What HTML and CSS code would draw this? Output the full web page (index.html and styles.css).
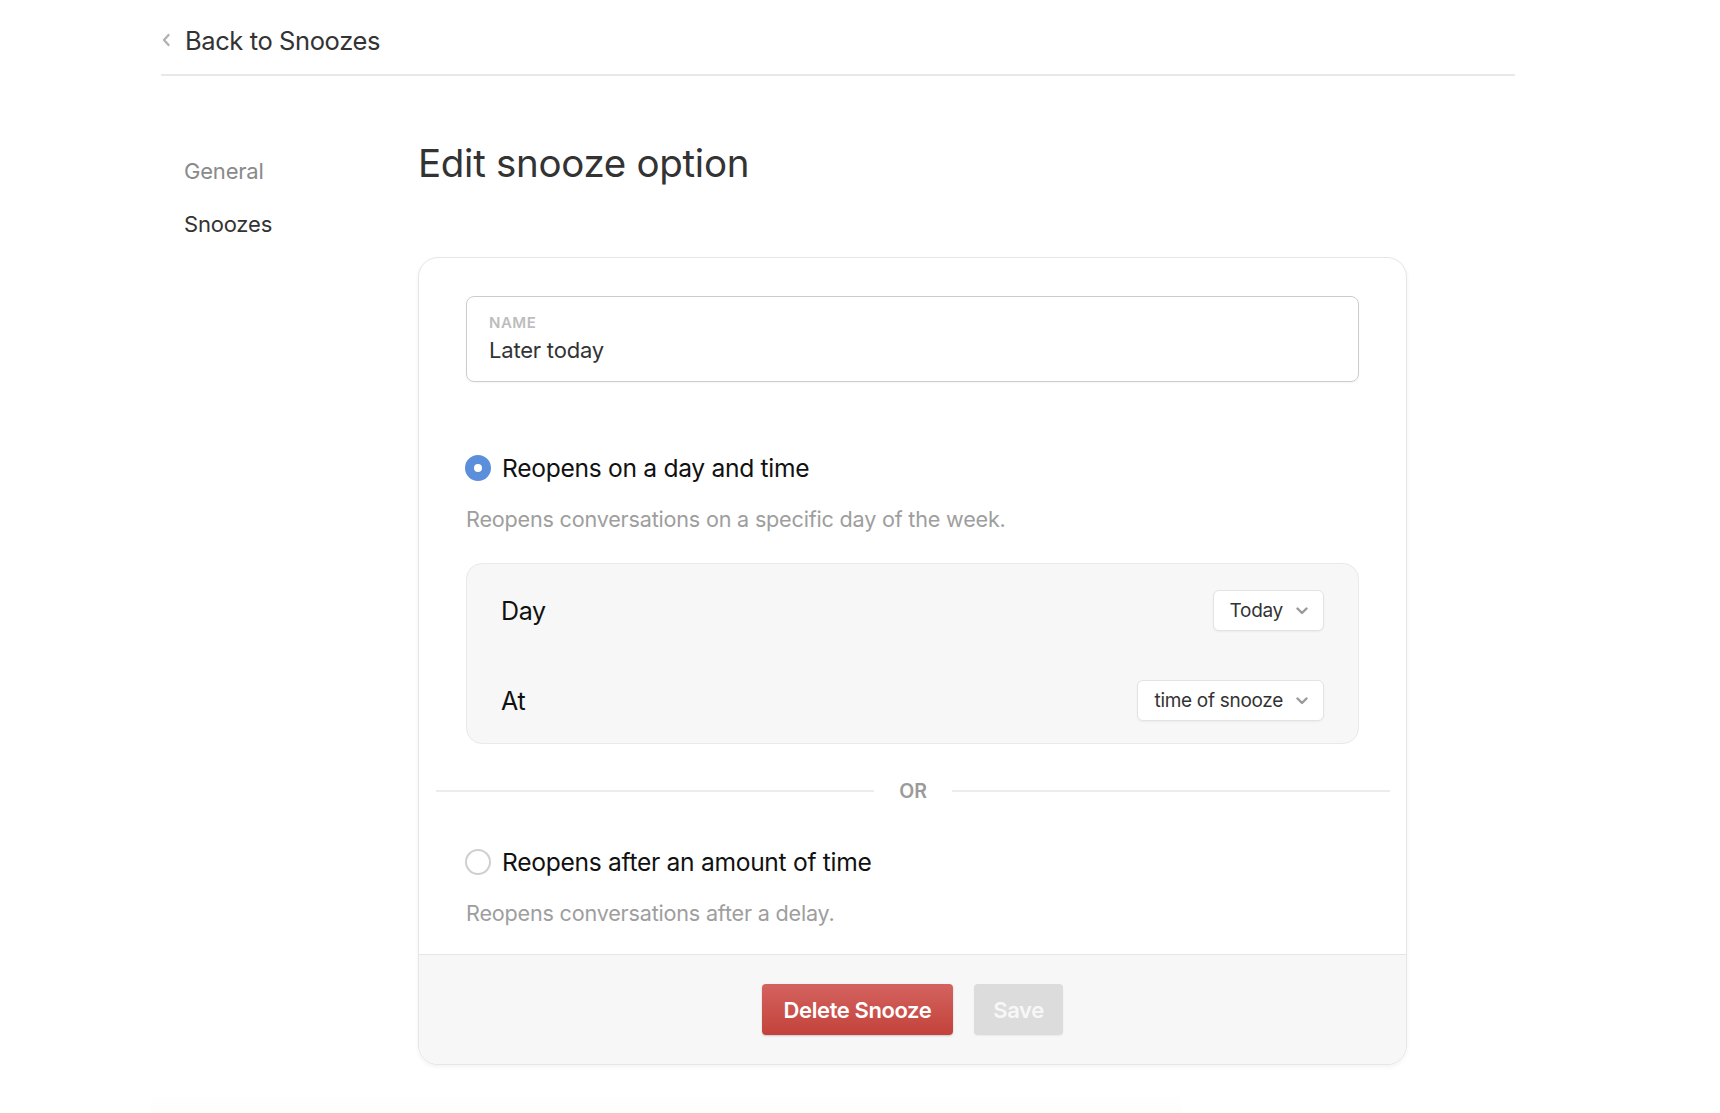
FILE: index.html
```html
<!DOCTYPE html>
<html lang="en">
<head>
<meta charset="utf-8">
<title>Edit snooze option</title>
<link rel="stylesheet" href="styles.css">
</head>
<body>
<div class="page">
  <header class="topbar">
    <a class="back-link" href="#">
      <svg class="back-chevron" width="10" height="14" viewBox="0 0 10 14" aria-hidden="true">
        <path d="M7.5 2 L3 7 L7.5 12" fill="none" stroke="#b3b3b3" stroke-width="2.4" stroke-linecap="round" stroke-linejoin="round"/>
      </svg>
      <span>Back to Snoozes</span>
    </a>
  </header>

  <div class="layout">
    <nav class="sidenav">
      <a class="sidenav-item" href="#">General</a>
      <a class="sidenav-item is-active" href="#">Snoozes</a>
    </nav>

    <main class="content">
      <h1 class="page-title">Edit snooze option</h1>

      <section class="card">
        <div class="card-body">
          <label class="field">
            <span class="field-label">NAME</span>
            <span class="field-value">Later today</span>
          </label>

          <div class="option">
            <div class="radio-row">
              <span class="radio is-checked"></span>
              <span class="radio-label">Reopens on a day and time</span>
            </div>
            <p class="option-desc">Reopens conversations on a specific day of the week.</p>
          </div>

          <div class="settings-box">
            <div class="settings-row">
              <span class="settings-label">Day</span>
              <button class="select" type="button">
                <span>Today</span>
                <svg class="select-caret" width="12" height="8" viewBox="0 0 12 8" aria-hidden="true"><path d="M1.5 1.5 L6 6 L10.5 1.5" fill="none" stroke="#9a9a9a" stroke-width="2.4" stroke-linecap="round" stroke-linejoin="round"/></svg>
              </button>
            </div>
            <div class="settings-row">
              <span class="settings-label">At</span>
              <button class="select" type="button">
                <span>time of snooze</span>
                <svg class="select-caret" width="12" height="8" viewBox="0 0 12 8" aria-hidden="true"><path d="M1.5 1.5 L6 6 L10.5 1.5" fill="none" stroke="#9a9a9a" stroke-width="2.4" stroke-linecap="round" stroke-linejoin="round"/></svg>
              </button>
            </div>
          </div>

          <div class="divider"><span>OR</span></div>

          <div class="option option-second">
            <div class="radio-row">
              <span class="radio"></span>
              <span class="radio-label">Reopens after an amount of time</span>
            </div>
            <p class="option-desc">Reopens conversations after a delay.</p>
          </div>
        </div>

        <footer class="card-footer">
          <button class="btn btn-danger" type="button">Delete Snooze</button>
          <button class="btn btn-disabled" type="button">Save</button>
        </footer>
      </section>
    </main>
  </div>
  <div class="page-fade"></div>
</div>
</body>
</html>
```

FILE: styles.css
```css
* { box-sizing: border-box; }

html, body {
  margin: 0;
  padding: 0;
  background: #ffffff;
}

body {
  font-family: Inter, "Noto Sans", "Liberation Sans", sans-serif;
  color: #333333;
  -webkit-font-smoothing: antialiased;
}

.page {
  width: 1354px;
  margin-left: 161px;
  min-height: 1113px;
  position: relative;
}

/* top bar with back link */
.topbar {
  height: 76px;
  padding-top: 6px;
  display: flex;
  align-items: center;
  border-bottom: 2px solid #e8e8e8;
}

.back-link {
  display: flex;
  align-items: center;
  gap: 14px;
  color: #333333;
  text-decoration: none;
  font-size: 25.5px;
  letter-spacing: -0.4px;
}

.back-chevron { display: block; }

/* two-column body */
.layout {
  display: grid;
  grid-template-columns: 257px 989px;
}

.sidenav {
  display: flex;
  flex-direction: column;
  gap: 23px;
  padding-left: 23px;
  padding-top: 80px;
}

.sidenav-item {
  font-size: 22px;
  line-height: 30px;
  color: #8a8a8a;
  text-decoration: none;
  letter-spacing: -0.2px;
}

.sidenav-item.is-active { color: #333333; }

.content {
  padding-top: 66px;
}

.page-title {
  margin: 0;
  font-size: 38.5px;
  line-height: 42px;
  font-weight: 400;
  color: #333333;
  letter-spacing: -0.3px;
}

/* card */
.card {
  margin-top: 73px;
  border: 1px solid #e6e6e6;
  border-radius: 20px;
  background: #ffffff;
  box-shadow: 0 2px 4px rgba(0, 0, 0, 0.05);
  overflow: hidden;
}

.card-body {
  padding: 38px 47px 27px;
}

.field {
  display: flex;
  flex-direction: column;
  height: 86px;
  border: 1.5px solid #cccccc;
  border-radius: 8px;
  padding: 17px 22px 0;
  box-shadow: 0 1px 2px rgba(0, 0, 0, 0.04);
}

.field-label {
  font-size: 15px;
  line-height: 18px;
  font-weight: 600;
  letter-spacing: 0.5px;
  color: #bdbdbd;
}

.field-value {
  margin-top: 4px;
  font-size: 22px;
  line-height: 28px;
  color: #333333;
  letter-spacing: -0.2px;
}

.option { margin-top: 71px; }
.option-second { margin-top: 44px; }

.radio-row {
  display: flex;
  align-items: center;
  gap: 11px;
  height: 30px;
}

.radio {
  flex: none;
  width: 26px;
  height: 26px;
  margin-left: -1px;
  border-radius: 50%;
  border: 2px solid #cfcfcf;
  background: #ffffff;
}

.radio.is-checked {
  border: 9px solid #5b8fdb;
  background: #ffffff;
}

.radio-label {
  font-size: 24.6px;
  color: #111111;
  letter-spacing: -0.3px;
}

.option-desc {
  margin: 22px 0 0;
  font-size: 21.6px;
  line-height: 28px;
  color: #9e9e9e;
  letter-spacing: -0.2px;
}

/* grey box with day / time rows */
.settings-box {
  margin-top: 30px;
  background: #f7f7f7;
  border: 1px solid #e9e9e9;
  border-radius: 16px;
  padding: 26px 34px 22px;
  display: flex;
  flex-direction: column;
  gap: 49px;
}

.settings-row {
  display: flex;
  align-items: center;
  justify-content: space-between;
  height: 41px;
}

.settings-label {
  font-size: 25px;
  color: #111111;
  letter-spacing: -0.3px;
}

.select {
  display: flex;
  align-items: center;
  gap: 13px;
  height: 41px;
  padding: 0 15px 0 16px;
  background: #ffffff;
  border: 1px solid #e3e3e3;
  border-radius: 6px;
  box-shadow: 0 1px 2px rgba(0, 0, 0, 0.05);
  font-family: inherit;
  font-size: 19px;
  color: #333333;
  letter-spacing: -0.3px;
}

.select-caret { display: block; }

/* OR separator */
.divider {
  display: flex;
  align-items: center;
  gap: 25px;
  margin: 35px -31px 0 -30px;
  height: 24px;
  font-size: 19.5px;
  font-weight: 600;
  color: #9a9a9a;
}

.divider::before,
.divider::after {
  content: "";
  flex: 1;
  height: 2px;
  background: #ececec;
}

/* footer with actions */
.card-footer {
  display: flex;
  justify-content: center;
  gap: 21px;
  padding: 29px 0 29px;
  background: #f7f7f7;
  border-top: 1px solid #e6e6e6;
}

.btn {
  height: 51px;
  border: none;
  border-radius: 4px;
  font-family: inherit;
  font-size: 22px;
  font-weight: 600;
  letter-spacing: -0.4px;
  color: #ffffff;
}

.btn-danger {
  width: 191px;
  background: linear-gradient(#d4635f, #c3423b);
  box-shadow: 0 1px 2px rgba(0, 0, 0, 0.2);
}

.btn-disabled {
  width: 89px;
  background: #dcdcdc;
  color: #f7f7f7;
  box-shadow: 0 1px 2px rgba(0, 0, 0, 0.06);
}

.page-fade {
  position: absolute;
  left: -10px;
  bottom: 0;
  width: 1030px;
  height: 20px;
  background: linear-gradient(rgba(0, 0, 0, 0), rgba(0, 0, 0, 0.012));
}
```
